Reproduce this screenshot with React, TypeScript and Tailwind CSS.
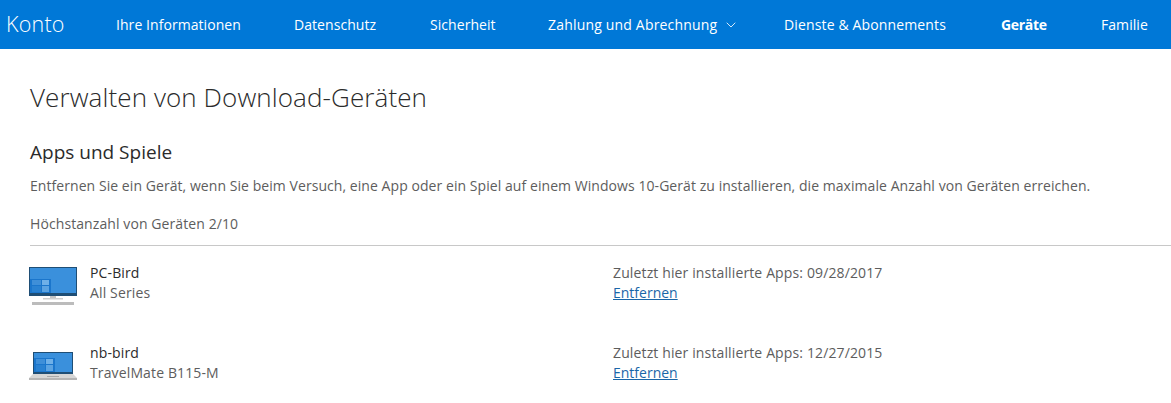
import { ChevronDown } from "lucide-react";

const navItems = [
  { label: "Ihre Informationen", width: "w-[125px]" },
  { label: "Datenschutz", width: "w-[83px]" },
  { label: "Sicherheit", width: "w-[65px]" },
];

const MonitorIcon = () => (
  <svg width="48" height="38" viewBox="0 0 48 38">
    <rect x="0" y="0" width="48" height="29" fill="#1f4e75" />
    <rect x="1" y="1" width="46" height="25" fill="#3a90dc" />
    <rect x="1" y="12" width="21" height="14" fill="#1b76cc" />
    <rect x="3" y="13" width="9" height="5" fill="#3f8fd8" />
    <rect x="13" y="13" width="7" height="5" fill="#6fb0e8" />
    <rect x="3" y="19" width="9" height="6" fill="#2a82d2" />
    <rect x="13" y="19" width="7" height="6" fill="#5ba3e2" />
    <rect x="21" y="29" width="6" height="3" fill="#c4c4c4" />
    <rect x="14" y="31" width="20" height="1.5" fill="#cfcfcf" />
    <rect x="3" y="35" width="42" height="3" fill="#bcbcbc" />
  </svg>
);

const LaptopIcon = () => (
  <svg width="48" height="28" viewBox="0 0 48 28">
    <rect x="4" y="0" width="40" height="22" fill="#1f4e75" />
    <rect x="5" y="1" width="38" height="19" fill="#3a90dc" />
    <rect x="5" y="6" width="21" height="14" fill="#1b76cc" />
    <rect x="7" y="7" width="9" height="5" fill="#3f8fd8" />
    <rect x="17" y="7" width="7" height="5" fill="#6fb0e8" />
    <rect x="7" y="13" width="9" height="6" fill="#2a82d2" />
    <rect x="17" y="13" width="7" height="6" fill="#5ba3e2" />
    <path d="M4 22h40l4 4H0z" fill="#d6d6d6" />
    <rect x="0" y="26" width="48" height="2" fill="#b5b5b5" />
    <rect x="18" y="24" width="12" height="1" fill="#a8a8a8" />
  </svg>
);

const devices = [
  {
    name: "PC-Bird",
    model: "All Series",
    date: "09/28/2017",
    icon: <MonitorIcon />,
  },
  {
    name: "nb-bird",
    model: "TravelMate B115-M",
    date: "12/27/2015",
    icon: <LaptopIcon />,
  },
];

export default function App() {
  return (
    <div className="h-[403px] w-[1171px] overflow-hidden bg-white font-['Open_Sans',sans-serif] text-[14px] text-[#5d5d5d]">
      <nav className="flex h-[49px] items-center bg-[#0078d7] text-white">
        <span className="ml-[6px] w-[110px] text-[21.5px] font-light tracking-[0.2px]">
          Konto
        </span>
        <div className="flex items-center gap-[53px] whitespace-nowrap text-[14px] tracking-[0.06px]">
          {navItems.map((item) => (
            <a key={item.label} className={item.width}>
              {item.label}
            </a>
          ))}
          <a className="-mr-[9px] flex w-[192px] items-center gap-[6px] tracking-[0.18px]">
            Zahlung und Abrechnung
            <ChevronDown size={16} strokeWidth={1.25} className="shrink-0" />
          </a>
          <a className="w-[162px] tracking-[0.14px]">Dienste &amp; Abonnements</a>
          <a className="ml-[2px] w-[46px] font-bold tracking-[-0.3px]">Geräte</a>
          <a className="ml-[1px] w-[46px]">Familie</a>
        </div>
      </nav>

      <main className="pt-[30px]">
        <h1 className="pl-[30px] text-[26px] leading-[36px] font-light tracking-[0.1px] text-[#2b2b2b]">
          Verwalten von Download-Geräten
        </h1>
        <h2 className="mt-[24px] pl-[30px] text-[19px] leading-[26px] text-[#2b2b2b]">
          Apps und Spiele
        </h2>
        <p className="mt-[11px] pl-[30px] text-[14px] leading-[20px] tracking-[0.06px] whitespace-nowrap">
          Entfernen Sie ein Gerät, wenn Sie beim Versuch, eine App oder ein
          Spiel auf einem Windows 10-Gerät zu installieren, die maximale Anzahl
          von Geräten erreichen.
        </p>
        <p className="mt-[18px] pb-[11px] pl-[30px] text-[14px] leading-[20px] tracking-[0.09px]">
          Höchstanzahl von Geräten 2/10
        </p>
        <div className="ml-[30px] border-t border-[#c8c8c8]">
          {devices.map((device) => (
            <div
              key={device.name}
              className="-ml-[1px] flex h-[80px] pt-[17px] text-[14px] leading-[20px] tracking-[0.13px]"
            >
              <div className="-mt-[1px] flex h-[48px] w-[61px] items-center">
                {device.icon}
              </div>
              <div className="w-[523px]">
                <div className="text-[#2b2b2b]">{device.name}</div>
                <div>{device.model}</div>
              </div>
              <div>
                <div>Zuletzt hier installierte Apps: {device.date}</div>
                <a className="tracking-[0px] text-[#1a66a8] underline">Entfernen</a>
              </div>
            </div>
          ))}
        </div>
      </main>
    </div>
  );
}
